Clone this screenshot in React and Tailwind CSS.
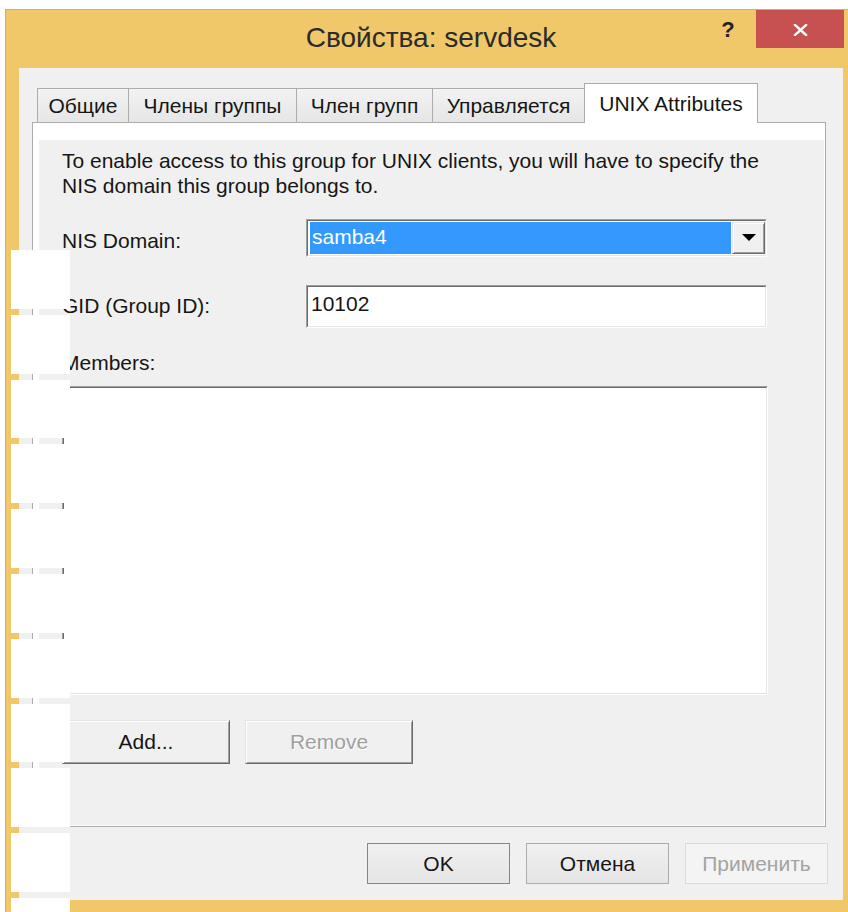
const tabs = [
  { label: 'Общие', width: 'w-[92px]' },
  { label: 'Члены группы', width: 'w-[169px]' },
  { label: 'Член групп', width: 'w-[137px]' },
  { label: 'Управляется', width: 'w-[153px]' },
];

// 3D borders in the classic control style
const sunken =
  'border border-t-[#a0a0a0] border-l-[#a0a0a0] border-r-white border-b-white';
const sunkenInner =
  'border border-t-[#696969] border-l-[#696969] border-r-[#e3e3e3] border-b-[#e3e3e3]';
const raised =
  'border border-t-[#e3e3e3] border-l-[#e3e3e3] border-r-[#696969] border-b-[#696969] shadow-[inset_1px_1px_0_#ffffff,inset_-1px_-1px_0_#a0a0a0]';

function CloseGlyph() {
  return (
    <svg width="15" height="12" viewBox="0 0 15 12">
      <path d="M2 1 L13 11 M13 1 L2 11" stroke="#ffffff" strokeWidth="2.4" strokeLinecap="square" />
    </svg>
  );
}

function TabStrip() {
  return (
    <div className="flex items-end h-[39px] pl-[5px]">
      {tabs.map((tab, i) => (
        <div
          key={tab.label}
          className={`${tab.width} ${i > 0 ? '-ml-px' : ''} h-[34px] border border-b-0 border-[#acacac] bg-gradient-to-b from-[#f2f2f2] to-[#e6e6e6] flex items-center justify-center text-[21px] leading-[25px] whitespace-nowrap`}
        >
          {tab.label}
        </div>
      ))}
      <div className="-ml-px w-[174px] h-[40px] -mb-px relative z-10 border border-b-0 border-[#acacac] bg-white flex items-center justify-center text-[21px] leading-[25px] whitespace-nowrap">
        UNIX Attributes
      </div>
    </div>
  );
}

function NisCombo() {
  return (
    <div className={`w-[461px] h-[38px] ${sunken}`}>
      <div className={`h-full ${sunkenInner} bg-white flex pl-[2px] py-[1px]`}>
        <div className="flex-1 mr-px bg-[#3399ff] text-white text-[21px] leading-[25px] pl-[2px] pt-[2px]">
          samba4
        </div>
        <div className={`w-[33px] bg-[#f0f0f0] ${raised} flex items-center justify-center`}>
          <svg width="14" height="8" viewBox="0 0 14 8">
            <path d="M0 0 H14 L7 7 Z" fill="#000000" />
          </svg>
        </div>
      </div>
    </div>
  );
}

function UnixPage() {
  return (
    <div className="flex-1 mt-[17px] ml-[6px] mr-px mb-px bg-[#f0f0f0] px-[23px] pt-[8px]">
      <p className="w-[715px] text-[21px] leading-[25px]">
        To enable access to this group for UNIX clients, you will have to specify the NIS domain
        this group belongs to.
      </p>

      {/* NIS domain */}
      <div className="flex mt-[21px]">
        <div className="w-[244px] pt-[9px] text-[21px] leading-[25px]">NIS Domain:</div>
        <NisCombo />
      </div>

      {/* Group id */}
      <div className="flex mt-[28px]">
        <div className="w-[244px] pt-[8px] text-[21px] leading-[25px]">GID (Group ID):</div>
        <div className={`w-[461px] h-[43px] ${sunken}`}>
          <div className={`h-full ${sunkenInner} bg-white text-[21px] leading-[25px] pl-[3px] pt-[4px]`}>
            10102
          </div>
        </div>
      </div>

      <div className="mt-[22px] text-[21px] leading-[25px]">Members:</div>
      <div className={`mt-[11px] w-[706px] h-[309px] ${sunken}`}>
        <div className={`h-full ${sunkenInner} bg-white`} />
      </div>

      <div className="flex gap-[15px] mt-[25px]">
        <button
          type="button"
          className={`w-[168px] h-[44px] bg-[#f0f0f0] ${raised} text-[21px] flex items-center justify-center`}
        >
          Add...
        </button>
        <button
          type="button"
          disabled
          className={`w-[168px] h-[44px] bg-[#f0f0f0] ${raised} text-[21px] text-[#a0a0a0] [text-shadow:1px_1px_0_#ffffff] flex items-center justify-center`}
        >
          Remove
        </button>
      </div>
    </div>
  );
}

function Footer() {
  return (
    <div className="flex justify-end gap-[16px] pr-[15px] mt-[16px]">
      <button
        type="button"
        className="w-[143px] h-[41px] border border-[#3399ff] bg-gradient-to-b from-[#f0f0f0] to-[#e5e5e5] text-[21px]"
      >
        OK
      </button>
      <button
        type="button"
        className="w-[143px] h-[41px] border border-[#acacac] bg-gradient-to-b from-[#f0f0f0] to-[#e5e5e5] text-[21px]"
      >
        Отмена
      </button>
      <button
        type="button"
        disabled
        className="w-[143px] h-[41px] border border-[#d9d9d9] bg-[#f4f4f4] text-[21px] text-[#a3a3a3]"
      >
        Применить
      </button>
    </div>
  );
}

function PropertiesWindow() {
  return (
    <div className="ml-[5px] mt-[9px] w-[843px] h-[903px] bg-[#f0c86a] border-t border-l border-[#d6af56] flex flex-col">
      {/* caption bar */}
      <div className="h-[58px] shrink-0 flex">
        <div className="w-[150px]" />
        <div className="flex-1 text-center text-[28px] leading-none pt-[14px] text-[#2b2b2b] whitespace-nowrap">
          Свойства: servdesk
        </div>
        <div className="w-[44px] pt-[9px] text-center text-[22px] leading-none font-bold text-[#222]">?</div>
        <div className="ml-[6px] w-[88px] h-[38px] bg-[#c75050] flex items-center justify-center pt-[2px]">
          <CloseGlyph />
        </div>
        <div className="w-[4px]" />
      </div>

      {/* client area */}
      <div className="flex-1 ml-[13px] mr-[5px] mb-[12px] bg-[#f0f0f0] pl-[13px] pt-[15px]">
        <div className="w-[794px]">
          <TabStrip />
          <div className="h-[705px] border border-[#acacac] bg-white flex">
            <UnixPage />
          </div>
        </div>
        <Footer />
      </div>
    </div>
  );
}

// white blocks covering the left edge
const blocks = Array.from({ length: 11 }, (_, i) => i);

export default function App() {
  return (
    <div className="relative w-[848px] h-[912px] bg-white overflow-hidden [font-family:'Liberation_Sans',Arial,sans-serif] text-[#161616]">
      <PropertiesWindow />
      <div className="absolute left-[11px] top-[250px] w-[59px] flex flex-col gap-[6px]">
        {blocks.map((b) => (
          <div key={b} className="h-[58.8px] shrink-0 bg-white" />
        ))}
      </div>
    </div>
  );
}
